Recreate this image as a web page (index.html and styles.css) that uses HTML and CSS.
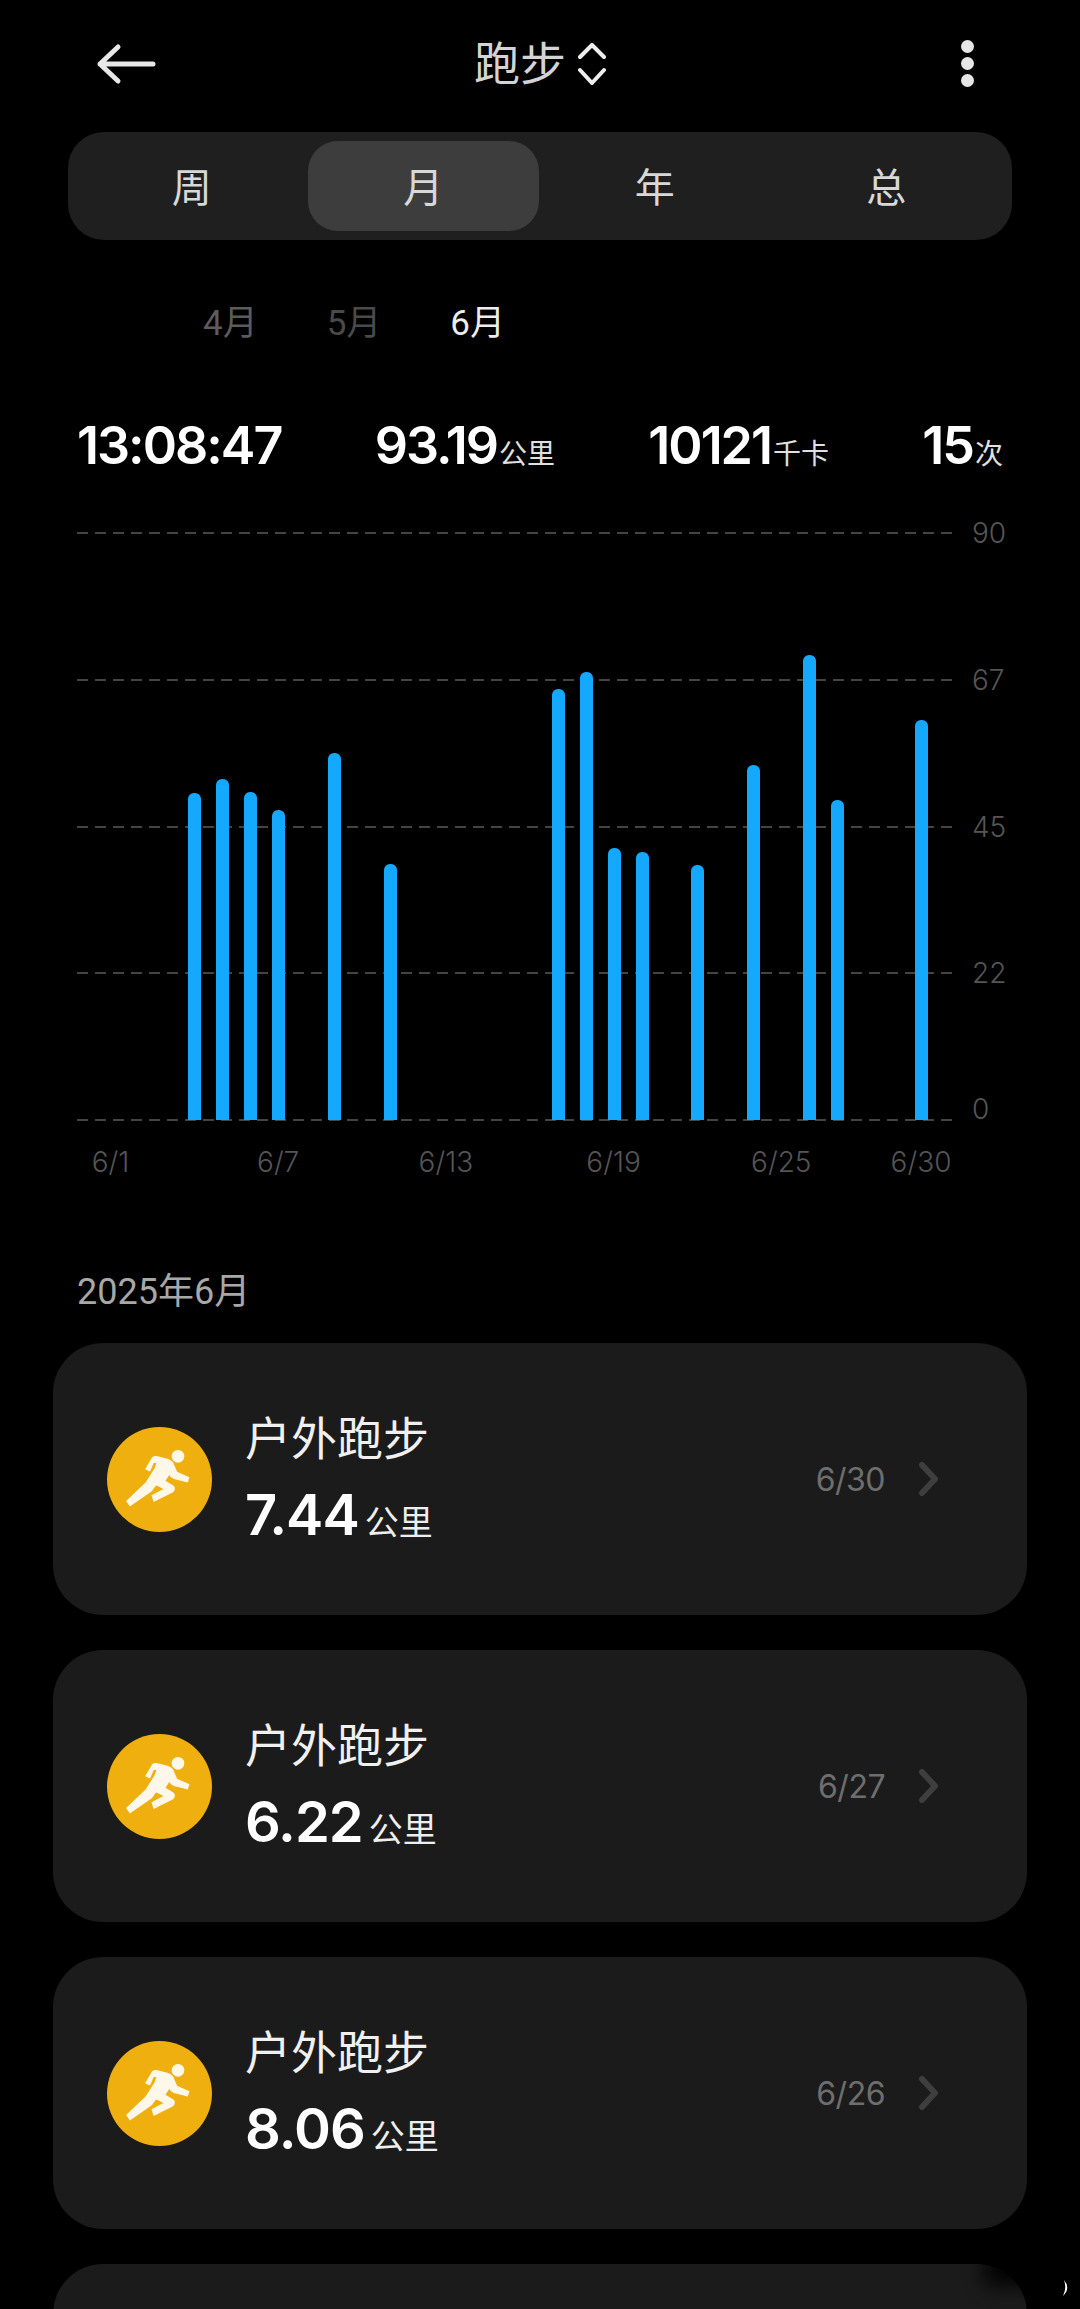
FILE: index.html
```html
<!DOCTYPE html>
<html lang="zh-CN">
<head>
    <meta charset="UTF-8">
    <meta name="viewport" content="width=device-width, initial-scale=1.0">
    <title>跑步</title>
    <link rel="stylesheet" href="styles.css">
</head>
<body>
    <svg class="defs" width="0" height="0">
        <symbol id="runner" viewBox="0 0 240 240">
            <circle cx="180" cy="52" r="17"/>
            <path d="M84 90 L104 56 Q108 52 116 53 L150 62 Q165 68 168 82 L176 100 L212 116 L208 128 L168 118 Q158 114 154 104 L140 126 L166 142 Q172 150 164 158 L108 186 L103 170 L140 150 L114 136 L100 155 L36 200 L27 186 L84 132 L112 88 L118 70 L106 70 L95 95 Z"/>
        </symbol>
        <symbol id="chevron" viewBox="0 0 22 36">
            <path d="M4 4 L17 18 L4 32" fill="none" stroke="#3e3e3e" stroke-width="6" stroke-linecap="round" stroke-linejoin="round"/>
        </symbol>
    </svg>

    <div class="page">
        <header class="topbar">
            <svg class="back" viewBox="0 0 60 44" fill="none" stroke="#e8e8e8" stroke-width="5" stroke-linecap="round" stroke-linejoin="round">
                <path d="M57 22 L4 22 M22 5 L4 22 L22 39"/>
            </svg>
            <div class="title">
                <span>跑步</span>
                <svg class="updown" viewBox="0 0 28 42" fill="none" stroke="#eeeeee" stroke-width="4" stroke-linecap="round" stroke-linejoin="round">
                    <path d="M2 14 L14 2 L26 14 M2 27 L14 40 L26 27"/>
                </svg>
            </div>
            <div class="kebab"><i></i><i></i><i></i></div>
        </header>

        <nav class="tabs">
            <div class="tab">周</div>
            <div class="tab active">月</div>
            <div class="tab">年</div>
            <div class="tab">总</div>
        </nav>

        <div class="months">
            <span class="month old">4月</span>
            <span class="month older">5月</span>
            <span class="month current">6月</span>
        </div>

        <div class="stats">
            <div class="stat"><b>13:08:47</b></div>
            <div class="stat"><b>93.19</b><small>公里</small></div>
            <div class="stat"><b>10121</b><small>千卡</small></div>
            <div class="stat"><b>15</b><small>次</small></div>
        </div>

        <section class="chart">
            <div class="grid-row"><div class="dash"></div><span class="y-label">90</span></div>
            <div class="grid-row"><div class="dash"></div><span class="y-label">67</span></div>
            <div class="grid-row"><div class="dash"></div><span class="y-label">45</span></div>
            <div class="grid-row"><div class="dash"></div><span class="y-label">22</span></div>
            <div class="grid-row"><div class="dash"></div><span class="y-label base">0</span></div>

            <div class="bars">
                <div class="bar" style="grid-column:4;height:327px"></div>
                <div class="bar" style="grid-column:5;height:341px"></div>
                <div class="bar" style="grid-column:6;height:328px"></div>
                <div class="bar" style="grid-column:7;height:310px"></div>
                <div class="bar" style="grid-column:9;height:367px"></div>
                <div class="bar" style="grid-column:11;height:256px"></div>
                <div class="bar" style="grid-column:17;height:431px"></div>
                <div class="bar" style="grid-column:18;height:448px"></div>
                <div class="bar" style="grid-column:19;height:272px"></div>
                <div class="bar" style="grid-column:20;height:268px"></div>
                <div class="bar" style="grid-column:22;height:255px"></div>
                <div class="bar" style="grid-column:24;height:355px"></div>
                <div class="bar" style="grid-column:26;height:465px"></div>
                <div class="bar" style="grid-column:27;height:320px"></div>
                <div class="bar" style="grid-column:30;height:400px"></div>
            </div>
        </section>

        <div class="x-axis">
            <span style="grid-column:1">6/1</span>
            <span style="grid-column:7">6/7</span>
            <span style="grid-column:13">6/13</span>
            <span style="grid-column:19">6/19</span>
            <span style="grid-column:25">6/25</span>
            <span style="grid-column:30">6/30</span>
        </div>

        <h2 class="section-title">2025年6月</h2>

        <div class="records">
            <div class="card">
                <div class="badge"><svg class="runner"><use href="#runner"/></svg></div>
                <div class="info">
                    <div class="name">户外跑步</div>
                    <div class="distance"><b>7.44</b><span>公里</span></div>
                </div>
                <div class="date">6/30</div>
                <svg class="arrow"><use href="#chevron"/></svg>
            </div>
            <div class="card">
                <div class="badge"><svg class="runner"><use href="#runner"/></svg></div>
                <div class="info">
                    <div class="name">户外跑步</div>
                    <div class="distance"><b>6.22</b><span>公里</span></div>
                </div>
                <div class="date">6/27</div>
                <svg class="arrow"><use href="#chevron"/></svg>
            </div>
            <div class="card">
                <div class="badge"><svg class="runner"><use href="#runner"/></svg></div>
                <div class="info">
                    <div class="name">户外跑步</div>
                    <div class="distance"><b>8.06</b><span>公里</span></div>
                </div>
                <div class="date">6/26</div>
                <svg class="arrow"><use href="#chevron"/></svg>
            </div>
            <div class="card"></div>
        </div>

        <div class="smudge"></div>
        <svg class="speck" viewBox="0 0 8 16"><path d="M2 0 Q9 8 1 16 Q5 8 2 0 Z" fill="#ffffff"/></svg>
    </div>
</body>
</html>
```

FILE: styles.css
```css
* {
    box-sizing: border-box;
}
html, body {
    margin: 0;
    background: #000;
}
body {
    font-family: Roboto, "Noto Sans CJK SC", sans-serif;
    color: #fff;
}
.defs {
    position: absolute;
}
.page {
    position: relative;
    width: 1080px;
    height: 2309px;
    overflow: hidden;
}

/* top bar */
.topbar {
    display: grid;
    grid-template-columns: 1fr auto 1fr;
    align-items: center;
    height: 128px;
    padding: 0 96px;
    margin-bottom: 4px;
}
.back {
    width: 60px;
    height: 44px;
}
.title {
    display: flex;
    align-items: center;
    gap: 12px;
    font-size: 46px;
    line-height: 60px;
    color: #d4d4d4;
}
.updown {
    width: 28px;
    height: 42px;
}
.kebab {
    justify-self: end;
    display: flex;
    flex-direction: column;
    gap: 4px;
    margin: -2px 10px 0 0;
}
.kebab i {
    display: block;
    width: 13px;
    height: 13px;
    border-radius: 50%;
    background: #e6e6e6;
}

/* period tabs */
.tabs {
    display: grid;
    grid-template-columns: repeat(4, 1fr);
    height: 108px;
    margin: 0 68px;
    padding: 9px 10px 9px 8px;
    background: #1f1f1f;
    border-radius: 36px;
}
.tab {
    display: flex;
    align-items: center;
    justify-content: center;
    padding-bottom: 3px;
    font-size: 40px;
    color: #d8d8d8;
    border-radius: 30px;
}
.tab.active {
    background: #3d3d3d;
}

.months {
    display: flex;
    gap: 69px;
    padding-left: 203px;
    margin-top: 60px;
    font-size: 35px;
    line-height: 48px;
}
.month.old {
    color: #5c5c5c;
}
.month.older {
    color: #4a4a4a;
}
.month.current {
    color: #eeeeee;
}

/* totals */
.stats {
    display: flex;
    justify-content: space-between;
    align-items: baseline;
    padding: 0 77px;
    margin-top: 65px;
    line-height: 66px;
}
.stat b {
    font-family: Inter, sans-serif;
    font-size: 52px;
    font-weight: 600;
    letter-spacing: -2px;
}
.stat small {
    font-size: 28px;
    color: #e0e0e0;
    margin-left: 2px;
}

/* chart */
.chart {
    position: relative;
    display: flex;
    flex-direction: column;
    justify-content: space-between;
    height: 627px;
    margin: 21px 0 0 77px;
}
.grid-row {
    display: flex;
    align-items: center;
    height: 40px;
}
.dash {
    width: 875px;
    height: 2px;
    background: repeating-linear-gradient(90deg, #444 0, #444 11px, transparent 11px, transparent 18px);
}
.y-label {
    margin-left: 20px;
    font-family: Inter, sans-serif;
    font-weight: 300;
    font-size: 28px;
    color: #555;
}
.y-label.base {
    margin-bottom: 22px;
}
.bars {
    position: absolute;
    left: 20px;
    bottom: 20px;
    width: 838.5px;
    height: 587px;
    display: grid;
    grid-template-columns: repeat(30, minmax(0, 1fr));
    align-items: end;
}
.bar {
    grid-row: 1;
    justify-self: center;
    width: 13px;
    background: #14a9ff;
    border-radius: 6px 6px 0 0;
}
.x-axis {
    display: grid;
    grid-template-columns: repeat(30, minmax(0, 1fr));
    width: 838.5px;
    margin: 2px 0 0 96.5px;
    font-family: Inter, sans-serif;
    font-weight: 300;
    font-size: 28px;
    line-height: 40px;
    color: #555;
}
.x-axis span {
    grid-row: 1;
    justify-self: center;
    white-space: nowrap;
}

.section-title {
    margin: 86px 0 0 77px;
    font-size: 36px;
    font-weight: 400;
    line-height: 48px;
    color: #a8a8a8;
}

/* record list */
.records {
    display: flex;
    flex-direction: column;
    gap: 35px;
    margin: 27px 53px 0;
}
.card {
    flex: none;
    display: flex;
    align-items: center;
    height: 272px;
    padding: 0 87px 0 54px;
    background: #1b1b1b;
    border-radius: 50px;
}
.badge {
    flex: none;
    display: flex;
    align-items: center;
    justify-content: center;
    width: 105px;
    height: 105px;
    border-radius: 50%;
    background: #efb00f;
}
.runner {
    width: 80px;
    height: 80px;
    margin-right: 3px;
    fill: #fff8ea;
    stroke: #fff8ea;
    stroke-width: 4;
}
.info {
    flex: 1;
    margin-left: 33px;
    padding-top: 14px;
}
.name {
    font-size: 46px;
    line-height: 62px;
    color: #f0f0f0;
}
.distance {
    margin-top: 10px;
    line-height: 70px;
}
.distance b {
    font-family: Inter, sans-serif;
    font-size: 56px;
    font-weight: 600;
    letter-spacing: -1px;
}
.distance span {
    margin-left: 6px;
    font-size: 34px;
    color: #eeeeee;
}
.date {
    font-family: Inter, sans-serif;
    font-size: 32px;
    letter-spacing: -0.5px;
    color: #6e6e6e;
}
.arrow {
    flex: none;
    width: 22px;
    height: 36px;
    margin-left: 33px;
}

/* screenshot leftovers in the bottom corner */
.smudge {
    position: absolute;
    left: 985px;
    top: 2255px;
    width: 70px;
    height: 30px;
    background: #000;
    filter: blur(10px);
}
.speck {
    position: absolute;
    left: 1062px;
    top: 2280px;
    width: 8px;
    height: 16px;
}
```
